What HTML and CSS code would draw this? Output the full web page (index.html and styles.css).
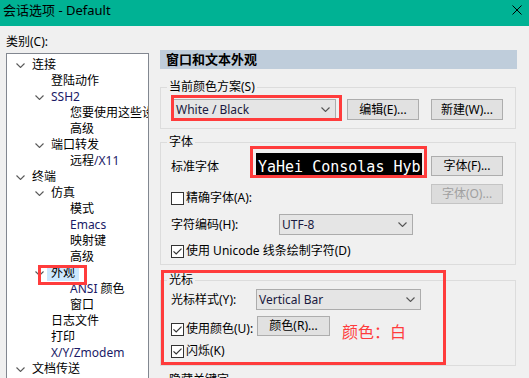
FILE: index.html
```html
<!DOCTYPE html>
<html>
<head>
<meta charset="utf-8">
<link rel="stylesheet" href="styles.css">
</head>
<body>
<div class="titlebar">
  <span class="title">会话选项 - Default</span>
  <svg class="close" width="10" height="10" viewBox="0 0 10 10"><path d="M0.5 0.5 9.5 9.5 M9.5 0.5 0.5 9.5" stroke="#000" stroke-width="1" fill="none"/></svg>
</div>
<div class="main">
  <div class="left">
    <div class="cat-label">类别(C):</div>
    <div class="tree">
      <div class="row l0"><span class="tg"><svg width="9" height="5" viewBox="0 0 9 5"><path d="M0.5 0.5 4.5 4.5 8.5 0.5" fill="none" stroke="#5a5a5a" stroke-width="1.1"/></svg></span><span class="lbl">连接</span></div>
      <div class="row l1"><span class="tg"></span><span class="lbl">登陆动作</span></div>
      <div class="row l1"><span class="tg"><svg width="9" height="5" viewBox="0 0 9 5"><path d="M0.5 0.5 4.5 4.5 8.5 0.5" fill="none" stroke="#5a5a5a" stroke-width="1.1"/></svg></span><span class="lbl en">SSH2</span></div>
      <div class="row l2"><span class="tg"></span><span class="lbl">您要使用这些设置</span></div>
      <div class="row l2"><span class="tg"></span><span class="lbl">高级</span></div>
      <div class="row l1"><span class="tg"><svg width="9" height="5" viewBox="0 0 9 5"><path d="M0.5 0.5 4.5 4.5 8.5 0.5" fill="none" stroke="#5a5a5a" stroke-width="1.1"/></svg></span><span class="lbl">端口转发</span></div>
      <div class="row l2"><span class="tg"></span><span class="lbl">远程<span class="en">/X11</span></span></div>
      <div class="row l0"><span class="tg"><svg width="9" height="5" viewBox="0 0 9 5"><path d="M0.5 0.5 4.5 4.5 8.5 0.5" fill="none" stroke="#5a5a5a" stroke-width="1.1"/></svg></span><span class="lbl">终端</span></div>
      <div class="row l1"><span class="tg"><svg width="9" height="5" viewBox="0 0 9 5"><path d="M0.5 0.5 4.5 4.5 8.5 0.5" fill="none" stroke="#5a5a5a" stroke-width="1.1"/></svg></span><span class="lbl">仿真</span></div>
      <div class="row l2"><span class="tg"></span><span class="lbl">模式</span></div>
      <div class="row l2"><span class="tg"></span><span class="lbl en">Emacs</span></div>
      <div class="row l2"><span class="tg"></span><span class="lbl">映射键</span></div>
      <div class="row l2"><span class="tg"></span><span class="lbl">高级</span></div>
      <div class="row l1"><span class="tg"><svg width="9" height="5" viewBox="0 0 9 5"><path d="M0.5 0.5 4.5 4.5 8.5 0.5" fill="none" stroke="#5a5a5a" stroke-width="1.1"/></svg></span><span class="lbl sel">外观<span class="mark tree-mark"></span></span></div>
      <div class="row l2"><span class="tg"></span><span class="lbl"><span class="en">ANSI</span> 颜色</span></div>
      <div class="row l2"><span class="tg"></span><span class="lbl">窗口</span></div>
      <div class="row l1"><span class="tg"></span><span class="lbl">日志文件</span></div>
      <div class="row l1"><span class="tg"></span><span class="lbl">打印</span></div>
      <div class="row l1"><span class="tg"></span><span class="lbl en">X/Y/Zmodem</span></div>
      <div class="row l0"><span class="tg"><svg width="9" height="5" viewBox="0 0 9 5"><path d="M0.5 0.5 4.5 4.5 8.5 0.5" fill="none" stroke="#5a5a5a" stroke-width="1.1"/></svg></span><span class="lbl">文档传送</span></div>
    </div>
  </div>

  <div class="right">
    <div class="header">窗口和文本外观</div>

    <fieldset class="group g1">
      <legend>当前颜色方案(S)</legend>
      <div class="gbody">
        <div class="frow">
          <div class="cwrap">
            <div class="combo w163"><span class="ctext">White / Black</span><svg width="9" height="5" viewBox="0 0 9 5"><path d="M0.5 0.5 4.5 4.5 8.5 0.5" fill="none" stroke="#555" stroke-width="1.1"/></svg></div>
            <span class="mark combo-mark"></span>
          </div>
          <div class="btn b-edit">编辑(E)...</div>
          <div class="btn b-new">新建(W)...</div>
        </div>
      </div>
    </fieldset>

    <fieldset class="group g2">
      <legend>字体</legend>
      <div class="gbody">
        <div class="frow top ra">
          <div class="lab w85 mt7">标准字体</div>
          <div class="pvwrap">
            <div class="preview">YaHei Consolas Hybrid</div>
            <span class="mark pv-mark"></span>
          </div>
          <div class="btn push mt3 h20">字体(F)...</div>
        </div>
        <div class="frow top rb">
          <div class="chk mt7"><svg width="13" height="13" viewBox="0 0 13 13"><rect x="0.5" y="0.5" width="12" height="12" fill="#fff" stroke="#333"/></svg><span>精确字体(A):</span></div>
          <div class="btn push dis h20">字体(O)...</div>
        </div>
        <div class="frow rc">
          <div class="lab w108">字符编码(H):</div>
          <div class="combo w134"><span class="ctext">UTF-8</span><svg width="9" height="5" viewBox="0 0 9 5"><path d="M0.5 0.5 4.5 4.5 8.5 0.5" fill="none" stroke="#555" stroke-width="1.1"/></svg></div>
        </div>
        <div class="frow rd">
          <div class="chk"><svg width="13" height="13" viewBox="0 0 13 13"><rect x="0.5" y="0.5" width="12" height="12" fill="#fff" stroke="#333"/><path d="M2.5 6.3 5.2 9 10.5 3.6" fill="none" stroke="#333" stroke-width="1.2"/></svg><span>使用 Unicode 线条绘制字符(D)</span></div>
        </div>
      </div>
    </fieldset>

    <fieldset class="group g3">
      <legend>光标</legend>
      <div class="gbody">
        <div class="frow">
          <div class="lab w85">光标样式(Y):</div>
          <div class="combo w165"><span class="ctext">Vertical Bar</span><svg width="9" height="5" viewBox="0 0 9 5"><path d="M0.5 0.5 4.5 4.5 8.5 0.5" fill="none" stroke="#555" stroke-width="1.1"/></svg></div>
        </div>
        <div class="frow top r3b">
          <div class="chk w86 mt6"><svg width="13" height="13" viewBox="0 0 13 13"><rect x="0.5" y="0.5" width="12" height="12" fill="#fff" stroke="#333"/><path d="M2.5 6.3 5.2 9 10.5 3.6" fill="none" stroke="#333" stroke-width="1.2"/></svg><span>使用颜色(U):</span></div>
          <div class="btn w73 h20">颜色(R)...</div>
          <div class="note">颜色：白</div>
        </div>
        <div class="frow r3c">
          <div class="chk"><svg width="13" height="13" viewBox="0 0 13 13"><rect x="0.5" y="0.5" width="12" height="12" fill="#fff" stroke="#333"/><path d="M2.5 6.3 5.2 9 10.5 3.6" fill="none" stroke="#333" stroke-width="1.2"/></svg><span>闪烁(K)</span></div>
        </div>
        <span class="mark cursor-mark"></span>
      </div>
    </fieldset>

    <fieldset class="group g4">
      <legend>隐藏关键字</legend>
      <div class="gbody"><div class="frow"><div class="lab">&nbsp;</div></div></div>
    </fieldset>
  </div>
</div>
</body>
</html>
```

FILE: styles.css
```css
* { box-sizing: border-box; }
html, body { margin: 0; padding: 0; }
body {
  width: 529px;
  height: 378px;
  overflow: hidden;
  background: #f0f0f0;
  font-family: "Noto Sans", "Noto Sans CJK SC", sans-serif;
  font-size: 12px;
  color: #000;
}

.titlebar {
  height: 26px;
  background: #00b294;
  display: flex;
  justify-content: space-between;
  align-items: flex-start;
  padding: 3px 7px 0 3px;
}
.title { font-size: 13px; line-height: 15px; }
.close { margin-top: 2px; display: block; }

.main { display: flex; height: 352px; }

.left { flex: none; width: 149px; padding-left: 6px; }
.cat-label { padding-top: 8px; line-height: 15px; }
.tree {
  margin-top: 4px;
  height: 400px;
  background: #fff;
  border: 1px solid #828790;
  padding-top: 3px;
  overflow: hidden;
}
.row { display: flex; align-items: center; height: 16px; white-space: nowrap; }
.l0 { padding-left: 5px; }
.l1 { padding-left: 24px; }
.l2 { padding-left: 43px; }
.tg { flex: none; width: 16px; height: 16px; display: flex; align-items: center; justify-content: center; }
.tg svg { display: block; }
.lbl { display: block; padding: 0 4px; line-height: 16px; height: 16px; }
.en { color: #1a1a66; }
.sel { position: relative; background: #cce8ff; }

.mark { position: absolute; border: 3px solid #ff3c3c; pointer-events: none; }
.tree-mark { left: -9px; top: 0; width: 49px; height: 20px; }

.right { flex: none; width: 357px; margin-left: 11px; }
.header {
  margin-top: 24px;
  height: 19px;
  line-height: 19px;
  background: #bfcddb;
  padding-left: 6px;
  font-weight: bold;
  font-size: 13px;
}

.group {
  margin: 0;
  padding: 0;
  width: 356px;
  min-width: 0;
  border: 1px solid #dcdcdc;
}
.group legend { margin-left: 6px; padding: 0 2px; line-height: 14px; font-size: 12px; }
.g1 { margin-top: 11px; }
.g2 { margin-top: 6px; }
.g3 { margin-top: 8px; }
.g4 { margin-top: 7px; }

.gbody { position: relative; }
.g1 .gbody { padding: 5px 12px 8px 12px; }
.g2 .gbody { padding: 4px 12px 6px 10px; }
.g3 .gbody { padding: 2px 12px 7px 10px; }
.g4 .gbody { padding: 4px 12px 6px 10px; }

.frow { display: flex; align-items: center; }
.frow.top { align-items: flex-start; }
.rb { margin-top: 8px; }
.rc { margin-top: 9px; }
.rd { margin-top: 9px; }
.r3b { margin-top: 6px; }
.r3c { margin-top: 8px; }

.lab { flex: none; line-height: 14px; white-space: nowrap; }
.w85 { width: 85px; }
.w86 { width: 86px; }
.w108 { width: 108px; }
.mt7 { margin-top: 7px; }
.mt6 { margin-top: 6px; }
.mt3 { margin-top: 3px; }

.btn {
  flex: none;
  width: 72px;
  height: 21px;
  background: #e1e1e1;
  border: 1px solid #adadad;
  display: flex;
  align-items: center;
  justify-content: center;
  line-height: 14px;
  white-space: nowrap;
}
.h20 { height: 20px; }
.w73 { width: 73px; }
.b-edit { margin-left: 11px; }
.b-new { margin-left: 12px; }
.push { margin-left: auto; }
.btn.dis { background: #dcdcdc; border-color: #c4c4c4; color: #a0a0a0; }

.cwrap { position: relative; flex: none; }
.combo {
  flex: none;
  height: 21px;
  background: #e5e5e5;
  border: 1px solid #acacac;
  display: flex;
  align-items: center;
  justify-content: space-between;
  padding: 0 5px 0 2px;
}
.combo svg { display: block; }
.ctext { line-height: 14px; white-space: nowrap; color: #1a1a40; }
.w163 { width: 163px; }
.w134 { width: 134px; }
.w165 { width: 165px; }
.combo-mark { left: -2px; top: -4px; width: 171px; height: 26px; }

.pvwrap { position: relative; flex: none; width: 166px; height: 22px; }
.preview {
  width: 166px;
  height: 22px;
  overflow: hidden;
  background: #000;
  color: #fff;
  font-family: "DejaVu Sans Mono", "Liberation Mono", monospace;
  font-size: 15px;
  line-height: 18px;
  padding: 5px 0 0 2px;
  white-space: nowrap;
}
.pv-mark { left: -6px; top: -7px; width: 177px; height: 32px; }

.chk { flex: none; display: flex; align-items: center; white-space: nowrap; }
.chk svg { display: block; flex: none; }
.chk span { margin-left: 2px; line-height: 14px; }

.note {
  margin-left: 12px;
  margin-top: 6px;
  margin-bottom: -6px;
  line-height: 20px;
  font-size: 16px;
  color: #ff3c3c;
  white-space: nowrap;
}
.cursor-mark { left: 0; top: -17px; width: 285px; height: 95px; }
```
